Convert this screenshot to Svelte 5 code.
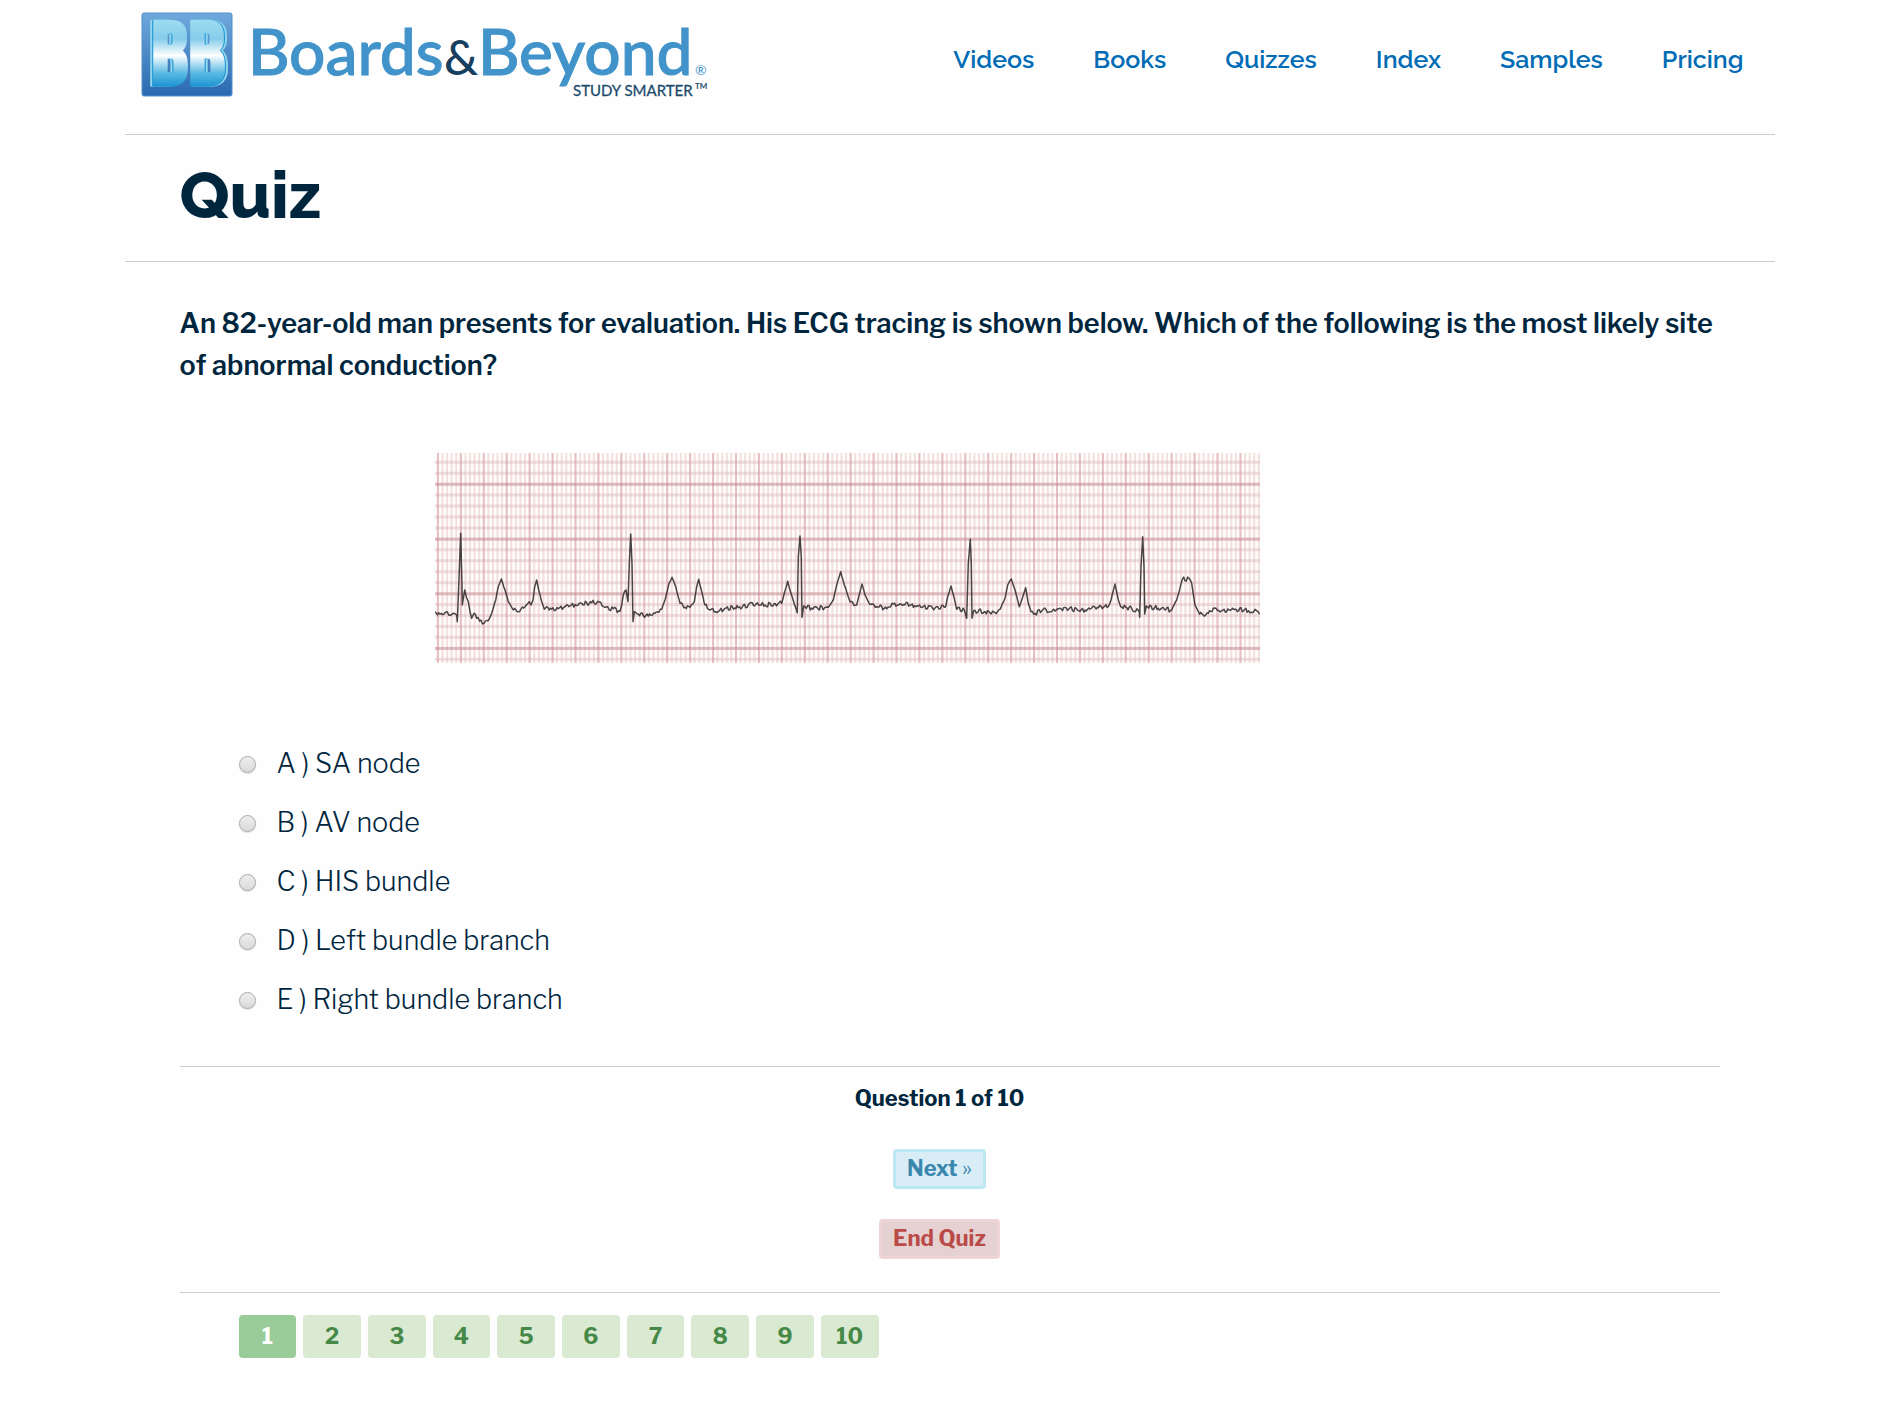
<script>
  const links = ['Videos', 'Books', 'Quizzes', 'Index', 'Samples', 'Pricing'];
  const answers = [
    ['A', 'SA node'],
    ['B', 'AV node'],
    ['C', 'HIS bundle'],
    ['D', 'Left bundle branch'],
    ['E', 'Right bundle branch']
  ];
  const pages = [1, 2, 3, 4, 5, 6, 7, 8, 9, 10];
  let current = $state(1);
  let chosen = $state('');

  // Key points of the tracing in three strips; units are thirds of a grid unit.
  const strips = [
    [-30, '30,515 45,522 60,518 75,526 88,520 95,525 97,545 101,440 103,390 107,280 111,440 112,495 119,450 124,470 130,485 135,515 140,535 147,520 155,535 168,540 177,550 190,542 200,520 212,480 220,440 229,417 240,450 250,485 262,505 280,515 300,500 313,485 318,495 324,480 329,440 335,420 341,450 350,485 358,508 365,500 380,508 400,506 420,500 450,494 470,490 500,488 527,487 540,502 565,506 585,514 590,495 595,465 603,450 609,485 613,370 617,282 621,370 624,545 628,515 640,522 670,528 690,520 710,508 720,480 732,430 741,412 752,440 765,490 780,502 795,502 808,485 815,440 821,418 829,450 838,490'],
    [810, '0,495 15,510 40,515 60,505 100,503 130,494 180,495 230,490 238,460 248,424 258,460 268,492 277,518 280,350 285,288 289,350 291,532 296,498 320,504 370,502 385,480 395,435 407,395 418,435 435,485 455,495 461,470 471,432 480,465 490,485 515,500 545,506 565,492 600,494 640,498 690,504 722,500 728,470 738,438 748,475 755,508 778,510 785,535 790,370 796,298 799,370 801,535 806,512 838,515'],
    [1650, '0,515 30,518 45,508 60,475 68,435 79,417 90,450 103,500 112,475 122,443 130,490 138,515 150,520 175,508 195,515 225,505 300,510 330,502 370,500 378,480 390,432 400,480 407,500 440,505 463,515 464,532 468,380 473,290 477,380 479,522 484,498 520,505 560,510 575,480 592,418 612,415 620,430 630,495 640,515 655,525 670,520 685,505 710,512 750,508 790,512 800,517 810,508 824,522']
  ];
  const keys = strips.flatMap(([dx, s]) =>
    s.split(' ').map((p) => {
      const [x, y] = p.split(',').map(Number);
      return [(x + dx) / 3, y / 3 - 13];
    })
  );
  // Adds the small baseline jitter between key points.
  const jitter = (i) => (((Math.sin(i * 127.1) * 43758.5453) % 1) * 2.4);
  let n = 0;
  const pts = [];
  keys.forEach(([x, y], i) => {
    pts.push([x, y]);
    const next = keys[i + 1];
    if (!next) return;
    const steps = Math.floor((next[0] - x) / 1.2);
    for (let k = 1; k < steps; k++) {
      const t = k / steps;
      const flat = Math.abs(next[1] - y) < 6 ? 1 : 0.25;
      pts.push([x + (next[0] - x) * t, y + (next[1] - y) * t + jitter(++n) * flat]);
    }
  });
  const trace = pts.map(([x, y]) => x.toFixed(1) + ',' + y.toFixed(1)).join(' ');
  const minorX = Array.from({ length: 180 }, (_, i) => 2.9 + (i * 22.93) / 5);
  const majorX = Array.from({ length: 36 }, (_, i) => 2.9 + i * 22.93);
  const minorY = Array.from({ length: 19 }, (_, i) => 9.3 + i * 10.94);
  const majorY = [31.2, 86.2, 141, 195.5];
</script>

<div class="page">
  <header>
    <a class="logo" href="#home" aria-label="Boards and Beyond home">
      <svg width="568" height="90" viewBox="0 0 568 90">
        <defs>
          <linearGradient id="tile" x1="0" y1="0" x2="0" y2="1">
            <stop offset="0" stop-color="#6fa9dc" />
            <stop offset="1" stop-color="#2a69b0" />
          </linearGradient>
          <linearGradient id="face" gradientUnits="userSpaceOnUse" x1="0" y1="8" x2="0" y2="76">
            <stop offset="0" stop-color="#9ddcf0" />
            <stop offset="0.28" stop-color="#86cdeb" />
            <stop offset="0.52" stop-color="#ffffff" />
            <stop offset="0.78" stop-color="#5bb9e2" />
            <stop offset="1" stop-color="#1590cf" />
          </linearGradient>
        </defs>
        <rect x="1" y="1" width="90" height="83" rx="2" fill="url(#tile)" stroke="#5590cb" stroke-width="1" />
        <text class="mono left" x="11" y="72" fill="url(#face)" stroke="url(#face)">B</text>
        <text class="mono right" x="48" y="72" fill="url(#face)" stroke="url(#face)">B</text>
        <text class="word" x="107" y="63">Boards</text>
        <text class="amp" x="303" y="63">&amp;</text>
        <text class="word" x="337" y="63">Beyond</text>
        <text class="reg" x="554" y="63">®</text>
        <text class="tag" x="432" y="84">STUDY SMARTER</text>
        <text class="tm" x="554" y="77">TM</text>
      </svg>
    </a>
    <nav>
      {#each links as link}<a href={'#' + link.toLowerCase()}>{link}</a>{/each}
    </nav>
  </header>

  <div class="title"><h1>Quiz</h1></div>

  <main>
    <p class="question" id="question">
      An 82-year-old man presents for evaluation. His ECG tracing is shown below. Which of the following is the most likely site of abnormal conduction?
    </p>

    <svg class="ecg" viewBox="0 0 825 210" role="img" aria-label="ECG tracing">
      <rect width="825" height="210" fill="#fffdfc" />
      {#each minorY as y}<path d="M0 {y}H825" stroke="#d3aaaa" stroke-opacity="0.36" stroke-width="3" />{/each}
      {#each minorX as x}<path d="M{x} 0V210" stroke="#dfb5b3" stroke-opacity="0.4" stroke-width="2" />{/each}
      {#each majorX as x}<path d="M{x} 0V210" stroke="#d08a92" stroke-opacity="0.38" stroke-width="2" />{/each}
      {#each majorY as y}<path d="M0 {y}H825" stroke="#c08088" stroke-opacity="0.36" stroke-width="3" />{/each}
      <polyline points={trace} fill="none" stroke="#2c2628" stroke-opacity="0.85" stroke-width="1.5" stroke-linejoin="round" />
    </svg>

    <div class="answers" role="radiogroup" aria-labelledby="question">
      {#each answers as [letter, text]}
        <label>
          <input type="radio" name="answer" value={letter} bind:group={chosen} />
          <span>{letter} ) {text}</span>
        </label>
      {/each}
    </div>

    <section class="progress">
      <p>Question {current} of 10</p>
      <button class="next" onclick={() => (current = Math.min(10, current + 1))}>Next <small>»</small></button>
      <button class="end">End Quiz</button>
    </section>

    <div class="pages">
      {#each pages as page}
        <button class:active={page === current} onclick={() => (current = page)}>{page}</button>
      {/each}
    </div>
  </main>
</div>

<style>
  :global(body) {
    margin: 0;
    background: #fefefe;
  }
  .page {
    max-width: 1650px;
    margin: 0 auto;
    color: #00263e;
    font-family: "Libre Franklin", "Liberation Sans", sans-serif;
  }
  header {
    display: flex;
    justify-content: space-between;
    align-items: flex-start;
    box-sizing: border-box;
    height: 135px;
    padding: 12px 31px 0 16px;
    border-bottom: 1px solid #ccc;
  }
  .logo svg {
    display: block;
    overflow: visible;
  }
  .mono {
    font: 700 88px "Bebas Neue", Oswald, "Roboto Condensed", "Open Sans Condensed", "Liberation Sans Narrow", "Liberation Sans", sans-serif;
    stroke-width: 2;
  }
  .left {
    filter: drop-shadow(-1px 0 0 #1590cf) drop-shadow(-2px 0 0 #8fd6f0);
  }
  .right {
    filter: drop-shadow(1px 0 0 #1590cf) drop-shadow(2px 0 0 #8fd6f0);
  }
  .word,
  .amp {
    font: 500 64px Lato, sans-serif;
    fill: #4193ca;
  }
  .word {
    stroke: #4193ca;
    stroke-width: 1;
  }
  .amp {
    font-size: 48px;
    fill: #173f5f;
  }
  .reg {
    font: 400 14px Lato, sans-serif;
    fill: #4193ca;
  }
  .tag {
    font: 400 15px Lato, sans-serif;
    fill: #1c4a6b;
    stroke: #1c4a6b;
    stroke-width: 0.3;
  }
  .tm {
    font: 700 8px Lato, sans-serif;
    fill: #1c4a6b;
  }
  nav {
    display: flex;
    gap: 59px;
    padding-top: 31px;
  }
  nav a {
    color: #006cb5;
    font: 600 25px/32px Raleway, Lato, sans-serif;
    text-decoration: none;
  }
  .title {
    padding: 24px 55px 30px;
    border-bottom: 1px solid #ccc;
  }
  h1 {
    margin: 0;
    font: 800 66px/72px Raleway, Lato, sans-serif;
  }
  main {
    padding: 41px 55px;
  }
  .question {
    margin: 0 0 66px;
    font-size: 27px;
    font-weight: 600;
    line-height: 42px;
  }
  .ecg {
    display: block;
    width: 100%;
    max-width: 825px;
    margin-left: 255px;
  }
  .answers {
    display: grid;
    gap: 17px;
    padding: 80px 59px 45px;
  }
  label {
    display: flex;
    align-items: center;
    gap: 21px;
    font-size: 27px;
    font-weight: 300;
    line-height: 42px;
  }
  input {
    appearance: none;
    box-sizing: border-box;
    width: 17px;
    height: 17px;
    margin: 0;
    border: 1px solid #a9a9a9;
    border-radius: 50%;
    background: linear-gradient(#eee, #dadada);
    box-shadow: 0 1px 1px #ddd;
  }
  input:checked {
    background: radial-gradient(#444 0 4px, #ddd 5px);
  }
  .progress {
    display: flex;
    flex-direction: column;
    align-items: center;
    padding: 15px 20px 33px 0;
    border: 1px solid #ccc;
    border-width: 1px 0;
  }
  .progress p {
    margin: 0 0 35px;
    font-size: 22px;
    font-weight: 700;
    line-height: 32px;
  }
  button {
    box-sizing: border-box;
    border-radius: 4px;
    font: 700 22px/32px "Libre Franklin", "Liberation Sans", sans-serif;
  }
  .progress button {
    height: 40px;
    padding: 0 11px 2px;
    border: 3px solid #bce8f1;
  }
  .progress .next {
    margin-bottom: 30px;
    background: #d9edf7;
    color: #3a87ad;
  }
  .next small {
    font-size: 22px;
    font-weight: 400;
  }
  .progress .end {
    border-color: #eed3d7;
    background: #e6d1d2;
    color: #b94a48;
  }
  .pages {
    display: grid;
    grid-template-columns: repeat(10, 1fr);
    gap: 7px;
    max-width: 640px;
    padding: 22px 59px;
  }
  .pages button {
    height: 43px;
    padding: 0 0 2px;
    border: 0;
    background: #dae9d2;
    color: #468847;
  }
  .pages .active {
    background: #99cc99;
    color: #fff;
  }
</style>
